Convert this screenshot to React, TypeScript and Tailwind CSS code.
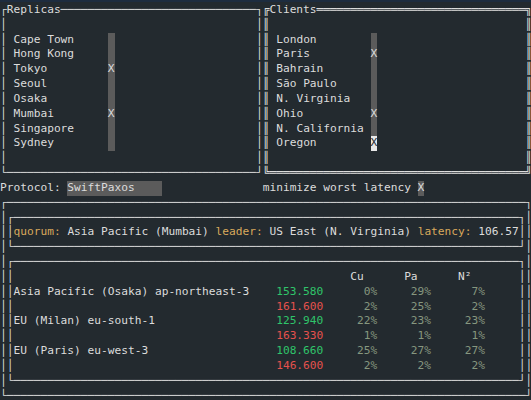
import React from "react";

type Seg = [string, string?];

const H = (n: number) => "─".repeat(n);
const D = (n: number) => "═".repeat(n);

const replicas = ["Cape Town", "Hong Kong", "Tokyo", "Seoul", "Osaka", "Mumbai", "Singapore", "Sydney"];
const replicaOn = ["Tokyo", "Mumbai"];
const clients = ["London", "Paris", "Bahrain", "São Paulo", "N. Virginia", "Ohio", "N. California", "Oregon"];
const clientOn = ["Paris", "Ohio", "Oregon"];

const rows = [
  { name: "Asia Pacific (Osaka) ap-northeast-3", best: "153.580", worst: "161.600", a: ["0%", "29%", "7%"], b: ["2%", "25%", "2%"] },
  { name: "EU (Milan) eu-south-1", best: "125.940", worst: "163.330", a: ["22%", "23%", "23%"], b: ["1%", "1%", "1%"] },
  { name: "EU (Paris) eu-west-3", best: "108.660", worst: "146.600", a: ["25%", "27%", "27%"], b: ["2%", "2%", "2%"] },
];

const pct = "text-[#86977f]";
const label = "text-[#d9a95c]";
// full-height cell background, like a terminal cell
const bar = "inline-block h-[14.84px] align-top bg-[#5b5b5b]";
const cursor = "inline-block h-[14.84px] align-top bg-[#e8e8e8] text-[#232a2f]";

function Line({ segs }: { segs: Seg[] }) {
  return (
    <div className="h-[14.84px] whitespace-pre">
      {segs.map(([t, c], i) => (
        <span key={i} className={c}>
          {t}
        </span>
      ))}
    </div>
  );
}

function pickRow(i: number): Seg[] {
  if (i < 0) return [["│" + " ".repeat(37) + "│"], ["║" + " ".repeat(38) + "║"]];
  const name = clients[i];
  return [
    ["│ " + replicas[i].padEnd(14)],
    [replicaOn.includes(replicas[i]) ? "X" : " ", bar],
    [" ".repeat(21) + "│"],
    ["║ " + name.padEnd(14)],
    [clientOn.includes(name) ? "X" : " ", name === "Oregon" ? cursor : bar],
    [" ".repeat(22) + "║"],
  ];
}

function tableRow(name: string, lat: string, latCls: string, p: string[]): Seg[] {
  return [
    ["││" + name.padEnd(39)],
    [lat, latCls],
    [p[0].padStart(8) + p[1].padStart(8) + p[2].padStart(8), pct],
    [" ".repeat(5) + "││"],
  ];
}

export default function App() {
  const lines: Seg[][] = [
    [["┌Replicas" + H(29) + "┐"], ["╔Clients" + D(31) + "╗"]],
    pickRow(-1),
    ...replicas.map((_, i) => pickRow(i)),
    pickRow(-1),
    [["└" + H(37) + "┘"], ["╚" + D(38) + "╝"]],
    [["Protocol: "], ["SwiftPaxos    ", bar], [" ".repeat(15) + "minimize worst latency "], ["X", bar]],
    [["┌" + H(77) + "┐"]],
    [["│┌" + H(75) + "┐│"]],
    [
      ["││"],
      ["quorum:", label],
      [" Asia Pacific (Mumbai) "],
      ["leader:", label],
      [" US East (N. Virginia) "],
      ["latency:", label],
      [" 106.57││"],
    ],
    [["│└" + H(75) + "┘│"]],
    [["│┌" + H(75) + "┐│"]],
    [["││" + " ".repeat(46) + "    Cu      Pa      N²  " + " ".repeat(5) + "││"]],
    ...rows.flatMap((r) => [
      tableRow(r.name, r.best, "text-[#2fc46a]", r.a),
      tableRow("", r.worst, "text-[#e5514d]", r.b),
    ]),
    [["│└" + H(75) + "┘│"]],
    [["└" + H(77) + "┘"]],
  ];

  return (
    <div className="h-[400px] w-[531px] overflow-hidden border-t-2 border-[#1d2c3f] bg-[#232a2f] pt-[1px] font-['DejaVu_Sans_Mono',monospace] text-[11.2px] leading-[14.84px] text-[#dcdcdc]">
      {lines.map((segs, i) => (
        <Line key={i} segs={segs} />
      ))}
    </div>
  );
}
